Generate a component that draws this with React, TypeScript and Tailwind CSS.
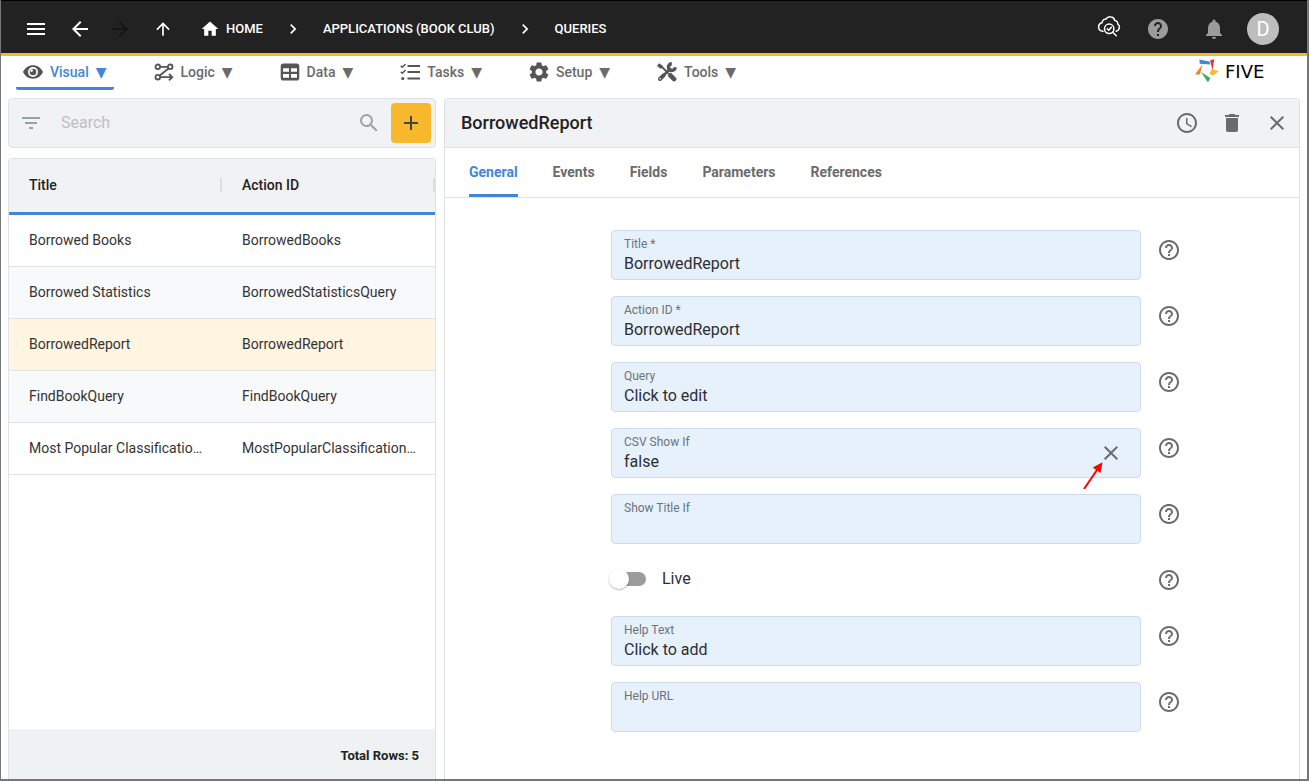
import { useState } from 'react'
import clsx from 'clsx'
import {
  MdAccessTime,
  MdAdd,
  MdArrowBack,
  MdArrowForward,
  MdArrowUpward,
  MdChevronRight,
  MdClose,
  MdDelete,
  MdFilterList,
  MdHelp,
  MdHelpOutline,
  MdHome,
  MdMenu,
  MdNotifications,
  MdSearch,
  MdSettings,
} from 'react-icons/md'

const queries = [
  { title: 'Borrowed Books', actionId: 'BorrowedBooks' },
  { title: 'Borrowed Statistics', actionId: 'BorrowedStatisticsQuery' },
  { title: 'BorrowedReport', actionId: 'BorrowedReport' },
  { title: 'FindBookQuery', actionId: 'FindBookQuery' },
  { title: 'Most Popular Classifications Query', actionId: 'MostPopularClassificationsQuery' },
]

const tabs = ['General', 'Events', 'Fields', 'Parameters', 'References']

function EyeIcon() {
  return (
    <svg viewBox="0 0 20 20" className="size-5" fill="none">
      <path d="M0 10C2 5.800 5.600 3.300 10 3.300S18 5.800 20 10c-2 4.200-5.600 6.700-10 6.700S2 14.200 0 10z" fill="#555" />
      <circle cx="10" cy="10" r="5" fill="#fff" />
      <circle cx="10" cy="10" r="3.300" fill="#555" />
      <circle cx="8.600" cy="8.600" r="1.300" fill="#fff" />
    </svg>
  )
}

function LogicIcon() {
  return (
    <svg viewBox="0 0 20 20" className="size-5" fill="none" stroke="#555" strokeWidth="1.800">
      <circle cx="3.800" cy="4.800" r="2.300" />
      <circle cx="16.200" cy="4.800" r="2.300" />
      <circle cx="3.800" cy="15.200" r="2.300" />
      <path d="M6 4.800h7.800M14.500 6.500L5.700 13.500M6 15.200h12M15 12l3.300 3.200L15 18.400" />
    </svg>
  )
}

function DataIcon() {
  return (
    <svg viewBox="0 0 20 20" className="size-5">
      <path
        fillRule="evenodd"
        fill="#555"
        d="M3.500 1.500h13A2.800 2.800 0 0 1 19.300 4.300v11.400a2.800 2.800 0 0 1-2.800 2.800h-13A2.800 2.800 0 0 1 .7 15.700V4.300a2.800 2.800 0 0 1 2.800-2.800zM3 6.300v3.400h6V6.300zM11 6.300v3.400h6V6.300zM3 12v3.700h6V12zM11 12v3.700h6V12z"
      />
    </svg>
  )
}

function TasksIcon() {
  return (
    <svg viewBox="0 0 20 20" className="size-5" fill="none" stroke="#555">
      <path strokeWidth="2" d="M7.500 4H20M7.500 10H20M7.500 16.500H20" />
      <path strokeWidth="1.500" d="M.8 3.700l1.500 1.500L5.500 2M.8 9.700l1.500 1.500L5.500 8" />
      <circle cx="2.800" cy="16.500" r="1.600" fill="#555" stroke="none" />
    </svg>
  )
}

function ToolsIcon() {
  return (
    <svg viewBox="0 0 20 20" className="size-5" fill="none" stroke="#555" strokeLinecap="round">
      <path strokeWidth="4" d="M3 17l3.600-3.600" />
      <path strokeWidth="2.600" d="M6 14l7-7" />
      <path strokeWidth="3.400" d="M18.200 5.200a3.400 3.400 0 1 1-3.400-3.500" strokeLinecap="butt" />
      <path strokeWidth="3.600" strokeLinecap="butt" d="M1 2.600L5 5.500" />
      <path strokeWidth="1.800" d="M4 4l7 7" />
      <path strokeWidth="4.600" d="M13.300 13.300l3.800 3.800" />
      <circle cx="3.200" cy="16.800" r=".8" fill="#fff" stroke="none" />
    </svg>
  )
}

function CloudCheckIcon() {
  return (
    <svg viewBox="0 0 24 24" className="size-6" fill="none" stroke="#fff" strokeWidth="1.500" strokeLinecap="round" strokeLinejoin="round">
      <path d="M6 17.300C3.300 17 1.600 15.300 1.600 13c0-2.200 1.500-3.800 3.500-4.200C5.200 6.500 6.900 4.900 9 5c1-1.700 2.700-2.600 4.600-2.300 2.100.2 3.700 1.700 4.100 3.700 2 .2 3.300 1.800 3.100 3.700 1.200.7 1.800 2 1.600 3.400-.2 1.800-1.400 3.200-3.200 3.700" />
      <circle cx="12.200" cy="14.800" r="4.700" />
      <path d="M10.300 14.800l1.400 1.400 2.700-2.900M15.700 18.200l3.600 3.500" />
    </svg>
  )
}

function FiveLogo() {
  return (
    <a href="#" className="flex items-center gap-1.5 text-black">
      <svg viewBox="0 0 24 24" className="size-6">
        <path fill="#4186d8" d="M4.300 1.400l10.300 2.200.4 3L4.800 5.800z" />
        <path fill="#e8343a" d="M15 2.500L19.200 1l-1.600 11.500z" />
        <path fill="#f8b82c" d="M16.500 11.200l7.300 2-5.800 4.300-3.300-1.800z" />
        <path fill="#3fae5a" d="M6 14l9.300 6-2.300 4.500z" />
        <path fill="#f57f2d" d="M7.300 6.500L5 16.600H0z" />
      </svg>
      <span className="w-[58px] pt-1 font-['DejaVu_Sans',sans-serif] text-lg leading-6">FIVE</span>
    </a>
  )
}

const menus = [
  { label: 'Visual', icon: <EyeIcon />, active: true },
  { label: 'Logic', icon: <LogicIcon /> },
  { label: 'Data', icon: <DataIcon /> },
  { label: 'Tasks', icon: <TasksIcon /> },
  { label: 'Setup', icon: <MdSettings className="size-6 -m-0.5 text-[#555]" /> },
  { label: 'Tools', icon: <ToolsIcon /> },
]

function IconButton({ label, className, children }: { label: string; className?: string; children: React.ReactNode }) {
  return (
    <button type="button" aria-label={label} className={clsx('flex size-10 shrink-0 items-center justify-center', className)}>
      {children}
    </button>
  )
}

function TopBar() {
  return (
    <header className="flex h-14 shrink-0 items-center border-t border-b-3 border-t-black border-b-[#f8b82c] bg-[#222] pt-[3px] pr-7 pl-[15px] text-white">
      <IconButton label="Menu" className="mr-1">
        <MdMenu className="size-6" />
      </IconButton>
      <IconButton label="Back">
        <MdArrowBack className="size-6" />
      </IconButton>
      <IconButton label="Forward" className="mr-[3px] text-[#151515]">
        <MdArrowForward className="size-6" />
      </IconButton>
      <IconButton label="Up" className="mr-[17px]">
        <MdArrowUpward className="size-5" />
      </IconButton>
      <nav className="flex items-center gap-5 text-[13px] font-medium whitespace-nowrap">
        <a href="#" className="flex items-center gap-1.5">
          <MdHome className="size-5" />
          HOME
        </a>
        <MdChevronRight className="size-5" />
        <a href="#">APPLICATIONS (BOOK CLUB)</a>
        <MdChevronRight className="size-5" />
        <a href="#">QUERIES</a>
      </nav>
      <div className="ml-auto flex items-center">
        <IconButton label="Inspect" className="mr-[9px] pb-1.5">
          <CloudCheckIcon />
        </IconButton>
        <IconButton label="Help" className="mr-4 text-[#9b9b9b]">
          <MdHelp className="size-6" />
        </IconButton>
        <IconButton label="Notifications" className="mr-[13px] text-[#9b9b9b]">
          <MdNotifications className="size-6" />
        </IconButton>
        <button type="button" className="size-8 rounded-full bg-[#bdbdbd] text-xl leading-8">
          D
        </button>
      </div>
    </header>
  )
}

function MenuBar() {
  return (
    <div className="flex h-[42px] shrink-0 items-start justify-between pr-6 pl-[15px]">
      <nav className="flex gap-[33px]">
        {menus.map((m) => (
          <button
            key={m.label}
            type="button"
            className={clsx(
              'flex h-[34px] items-center gap-[7px] border-b-3 px-[7px] text-sm font-medium',
              m.active ? 'rounded-b-xs border-[#4186d8] text-[#4186d8]' : 'border-transparent text-[#6b6b6b]',
            )}
          >
            {m.icon}
            <span className="flex items-center gap-[7px]">
              {m.label}
              <span className="font-['DejaVu_Sans',sans-serif]">▼</span>
            </span>
          </button>
        ))}
      </nav>
      <FiveLogo />
    </div>
  )
}

function QueryList() {
  const [selected, setSelected] = useState('BorrowedReport')

  return (
    <aside className="flex min-w-0 flex-col gap-2.5">
      <div className="flex h-[50px] shrink-0 items-center rounded border border-[#dfe1e3] bg-[#f1f2f4] pr-1 pl-2.5">
        <button type="button" aria-label="Filter">
          <MdFilterList className="size-6 text-[#99a1a8]" />
        </button>
        <input
          type="search"
          aria-label="Search"
          placeholder="Search"
          className="ml-[18px] min-w-0 flex-1 bg-transparent text-base outline-none placeholder:text-[#bdc0c3]"
        />
        <MdSearch className="mr-2.5 size-6 shrink-0 text-[#99a1a8]" />
        <IconButton label="Add" className="rounded bg-[#f8b82c] text-[#444]">
          <MdAdd className="size-6" />
        </IconButton>
      </div>
      <div className="flex flex-1 flex-col overflow-hidden rounded-t border border-b-0 border-[#dfe1e3]">
        <table className="w-full table-fixed border-separate border-spacing-0 text-left text-sm">
          <thead className="bg-[#f1f2f4]">
            <tr>
              {['Title', 'Action ID'].map((h) => (
                <th key={h} className="h-14 border-b-3 border-[#4186d8] p-0 pb-0.5 font-medium text-[#222]">
                  <div className="border-r-2 border-[#dcdedf] pl-5 leading-3.5">{h}</div>
                </th>
              ))}
            </tr>
          </thead>
          <tbody>
            {queries.map((q, i) => (
              <tr
                key={q.actionId}
                onClick={() => setSelected(q.actionId)}
                className={clsx(q.actionId === selected ? 'bg-[#fff5e1]' : i % 2 ? 'bg-[#f8f9fa]' : 'bg-white')}
              >
                <td className="h-13 truncate border-b border-[#dfe3e5] pr-3.5 pb-0.5 pl-5 text-[#333]">{q.title}</td>
                <td className="h-13 truncate border-b border-[#dfe3e5] pr-3.5 pb-0.5 pl-5 text-[#333]">{q.actionId}</td>
              </tr>
            ))}
          </tbody>
        </table>
        <div className="mt-auto flex h-[50px] items-center justify-end bg-[#eef2f3] px-4 pt-1 text-[13px] font-bold text-[#222]">
          Total Rows: 5
        </div>
      </div>
    </aside>
  )
}

function HelpButton({ label }: { label: string }) {
  return (
    <button type="button" aria-label={`Help for ${label}`} className="mt-2 size-6 shrink-0">
      <MdHelpOutline className="size-6 text-[#6b6b6b]" />
    </button>
  )
}

interface FieldProps {
  id: string
  label: string
  value?: string
  children?: React.ReactNode
}

function Field({ id, label, value = '', children }: FieldProps) {
  return (
    <div className="flex items-start gap-4">
      <div className="relative flex h-[50px] min-w-0 flex-1 items-center rounded border border-[#cbdbeb] bg-[#e7f1fc] pr-[17px] pl-3">
        <div className="flex min-w-0 flex-1 flex-col pt-0.5">
          <label htmlFor={id} className="text-xs text-[#6a737b]">
            {label}
          </label>
          <input id={id} defaultValue={value} className="h-6 w-full bg-transparent text-base text-[#2b2f33] outline-none" />
        </div>
        {children}
      </div>
      <HelpButton label={label} />
    </div>
  )
}

function ClearButton() {
  return (
    <>
      <button type="button" aria-label="Clear" className="text-[#6b6b6b]">
        <MdClose className="size-6" />
      </button>
      <svg viewBox="0 0 20 28" className="pointer-events-none absolute top-8 right-[37px] h-7 w-5">
        <path d="M1 28L14 9" stroke="#fe0000" strokeWidth="2" />
        <path d="M19.500 1.300L9.700 6.500l7.800 5.600z" fill="#fe0000" />
      </svg>
    </>
  )
}

function QueryForm() {
  return (
    <form className="mx-auto flex w-full max-w-[618px] flex-col gap-4 py-8 pl-12">
      <Field id="title" label="Title *" value="BorrowedReport" />
      <Field id="action-id" label="Action ID *" value="BorrowedReport" />
      <Field id="query" label="Query" value="Click to edit" />
      <Field id="csv-show-if" label="CSV Show If" value="false">
        <ClearButton />
      </Field>
      <Field id="show-title-if" label="Show Title If" />
      <div className="flex items-start justify-between">
        <label className="flex h-9.5 items-center gap-4 pl-px text-base text-[#2b2f33]">
          <input
            type="checkbox"
            role="switch"
            className="relative h-3.5 w-[34px] appearance-none rounded-full bg-[#9c9c9c] before:absolute before:-top-[3px] before:-left-[3px] before:size-5 before:rounded-full before:bg-white before:shadow-[0_1px_2px_rgba(0,0,0,0.3)] checked:bg-[#4186d8] checked:before:left-[17px]"
          />
          Live
        </label>
        <div className="h-10">
          <HelpButton label="Live" />
        </div>
      </div>
      <Field id="help-text" label="Help Text" value="Click to add" />
      <Field id="help-url" label="Help URL" />
    </form>
  )
}

function DetailPanel() {
  const [tab, setTab] = useState('General')

  return (
    <main className="flex min-w-0 flex-col rounded-t border border-b-0 border-[#dfe1e3]">
      <div className="flex h-[49px] shrink-0 items-center rounded-t border-b border-[#dfe1e3] bg-[#f1f2f4] pr-0.5 pl-4">
        <h1 className="flex-1 text-lg font-medium text-[#222]">BorrowedReport</h1>
        <div className="flex items-center gap-[5px] text-[#6b6b6b]">
          <IconButton label="History">
            <MdAccessTime className="size-6" />
          </IconButton>
          <IconButton label="Delete">
            <MdDelete className="size-6" />
          </IconButton>
          <IconButton label="Close">
            <MdClose className="size-6" />
          </IconButton>
        </div>
      </div>
      <div role="tablist" className="flex h-[50px] shrink-0 gap-[35px] border-b border-[#dfe1e3] px-6">
        {tabs.map((t) => (
          <button
            key={t}
            type="button"
            role="tab"
            aria-selected={t === tab}
            onClick={() => setTab(t)}
            className={clsx(
              'border-b-3 pt-0.5 text-sm font-bold',
              t === tab ? 'border-[#4186d8] text-[#4186d8]' : 'border-transparent text-[#6b6b6b]',
            )}
          >
            {t}
          </button>
        ))}
      </div>
      <QueryForm />
    </main>
  )
}

export default function App() {
  return (
    <div className="flex min-h-screen flex-col border-r-2 border-b-2 border-l border-[#777] bg-white font-[Roboto,sans-serif]">
      <TopBar />
      <MenuBar />
      <div className="grid flex-1 grid-cols-[1fr_2fr] gap-2 px-[7px]">
        <QueryList />
        <DetailPanel />
      </div>
    </div>
  )
}
